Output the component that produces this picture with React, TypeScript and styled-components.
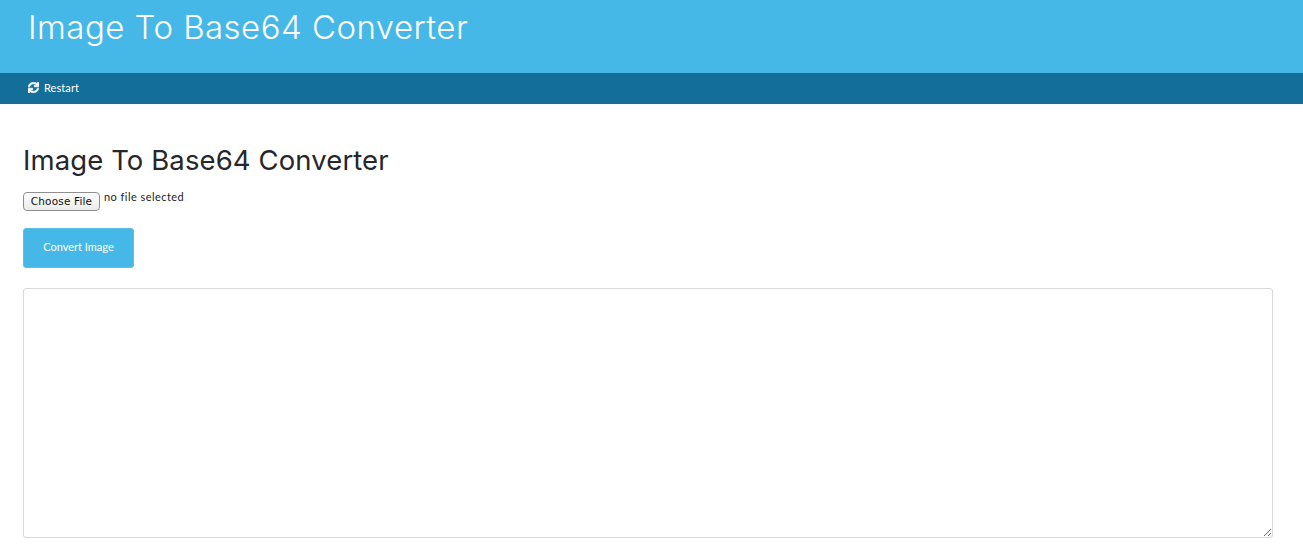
import styled, { createGlobalStyle } from "styled-components";
import { FaSync } from "react-icons/fa";

const GlobalStyle = createGlobalStyle`
  html, body {
    margin: 0;
    padding: 0;
    background: #fff;
    font-family: "Lato", "Liberation Sans", sans-serif;
  }
`;

export default function App() {
  return (
    <>
      <GlobalStyle />
      <Banner>
        <BannerTitle>Image To Base64 Converter</BannerTitle>
      </Banner>
      <NavBar>
        <NavLink href="#restart">
          <FaSync size={11} stroke="currentColor" strokeWidth={30} />
          Restart
        </NavLink>
      </NavBar>
      <Main>
        <Heading>Image To Base64 Converter</Heading>
        <FileRow>
          <ChooseButton type="button">Choose File</ChooseButton>
          <FileName>no file selected</FileName>
        </FileRow>
        <ConvertButton type="button">Convert Image</ConvertButton>
        <Output />
      </Main>
    </>
  );
}

const Banner = styled.header`
  height: 73px;
  box-sizing: border-box;
  padding: 7px 28px 0;
  background: #46b8e8;
`;

const BannerTitle = styled.h1`
  margin: 0;
  font-family: "Inter", sans-serif;
  font-size: 33px;
  line-height: 40px;
  font-weight: 300;
  letter-spacing: 0.45px;
  color: #fff;
`;

const NavBar = styled.nav`
  height: 31px;
  box-sizing: border-box;
  padding: 0 28px 3px;
  display: flex;
  align-items: center;
  background: #136f99;
`;

const NavLink = styled.a`
  display: flex;
  align-items: center;
  gap: 5px;
  font-size: 11px;
  letter-spacing: 0.08px;
  color: #fff;
  text-decoration: none;
`;

const Main = styled.main`
  padding: 38px 30px 0 23px;
  display: flex;
  flex-direction: column;
  align-items: flex-start;
`;

const Heading = styled.h2`
  margin: 0;
  font-family: "Inter", sans-serif;
  font-size: 27.5px;
  line-height: 36px;
  font-weight: 400;
  letter-spacing: 0.1px;
  color: #26262b;
`;

const FileRow = styled.div`
  margin-top: 14px;
  display: flex;
  align-items: flex-start;
  gap: 4px;
`;

const ChooseButton = styled.button`
  width: 77px;
  height: 19px;
  padding: 0 0 2px;
  box-sizing: border-box;
  border: 1px solid #8f8f8f;
  border-radius: 4px;
  background: linear-gradient(#fdfdfd, #ececec);
  font-family: "DejaVu Sans", sans-serif;
  font-size: 10.5px;
  letter-spacing: 0.15px;
  color: #111;
`;

const FileName = styled.span`
  margin-top: -2px;
  font-size: 11px;
  line-height: 13px;
  letter-spacing: 0.45px;
  color: #222;
`;

const ConvertButton = styled.button`
  margin-top: 17px;
  width: 111px;
  height: 40px;
  padding: 0 0 3px;
  border: 1px solid #5bc0ea;
  border-radius: 3px;
  background: #46b8e8;
  font-family: inherit;
  font-size: 11px;
  color: #fff;
`;

const Output = styled.textarea`
  margin-top: 20px;
  width: 100%;
  height: 250px;
  box-sizing: border-box;
  display: block;
  border: 1px solid #d9d9d9;
  border-radius: 3px;
  background: #fff;
`;
